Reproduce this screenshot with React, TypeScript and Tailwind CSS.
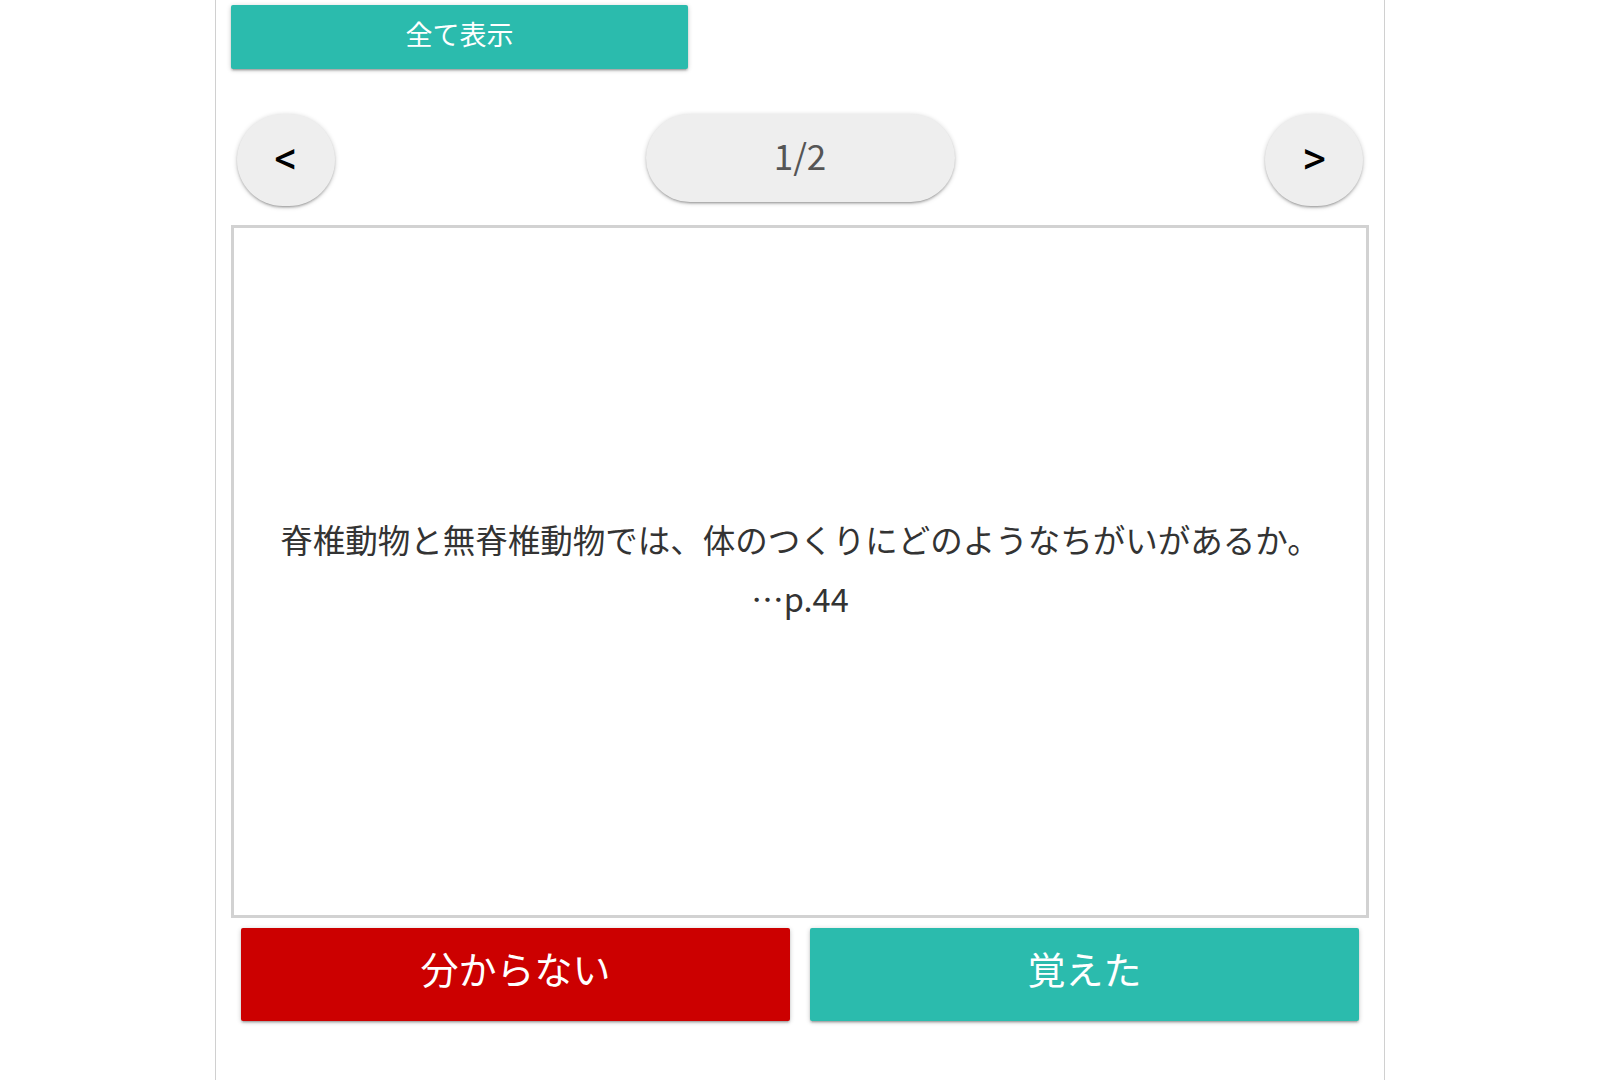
const jp = { fontFamily: '"Noto Sans CJK JP", "Noto Sans", sans-serif' };

const circleBtn =
  "w-[98px] h-[92px] rounded-full bg-[#eeeeee] text-black text-[46px] leading-none flex items-center justify-center pb-[4px] shadow-[0_2px_2px_0_rgba(0,0,0,0.14),0_3px_1px_-2px_rgba(0,0,0,0.12),0_1px_5px_0_rgba(0,0,0,0.2)]";

const flatShadow =
  "shadow-[0_2px_2px_0_rgba(0,0,0,0.14),0_3px_1px_-2px_rgba(0,0,0,0.12),0_1px_5px_0_rgba(0,0,0,0.2)]";

export default function App() {
  return (
    <div className="min-h-screen bg-white">
      <div
        className="mx-auto w-[1170px] min-h-screen border-x border-[#d0d0d0] px-[15px]"
        style={jp}
      >
        {/* Show all */}
        <div className="pt-[5px]">
          <button
            className={`w-[457px] h-[64px] pb-[6px] rounded-[2px] bg-[#2bbbad] text-white text-[27px] ${flatShadow}`}
          >
            全て表示
          </button>
        </div>

        {/* Pager */}
        <div className="mt-[45px] px-[6px] flex items-start justify-between">
          <button className={circleBtn} style={{ fontFamily: "Roboto, sans-serif" }}>
            &lt;
          </button>
          <div
            className={`w-[309px] h-[88px] pb-[5px] rounded-full bg-[#eeeeee] text-[#555555] text-[35px] flex items-center justify-center ${flatShadow}`}
          >
            1/2
          </div>
          <button className={circleBtn} style={{ fontFamily: "Roboto, sans-serif" }}>
            &gt;
          </button>
        </div>

        {/* Card */}
        <div className="mt-[19px] h-[693px] border-[3px] border-[#d2d2d2] flex items-center justify-center text-center">
          <p className="pb-[8px] text-[32.5px] leading-[59px] text-[#333333]">
            脊椎動物と無脊椎動物では、体のつくりにどのようなちがいがあるか。
            <br />
            …p.44
          </p>
        </div>

        {/* Answer buttons */}
        <div className="mt-[10px] px-[10px] grid grid-cols-2 gap-[20px]">
          <button
            className={`h-[93px] pb-[14px] rounded-[2px] bg-[#cc0000] text-white text-[38px] ${flatShadow}`}
          >
            分からない
          </button>
          <button
            className={`h-[93px] pb-[14px] rounded-[2px] bg-[#2bbbad] text-white text-[38px] ${flatShadow}`}
          >
            覚えた
          </button>
        </div>
      </div>
    </div>
  );
}
